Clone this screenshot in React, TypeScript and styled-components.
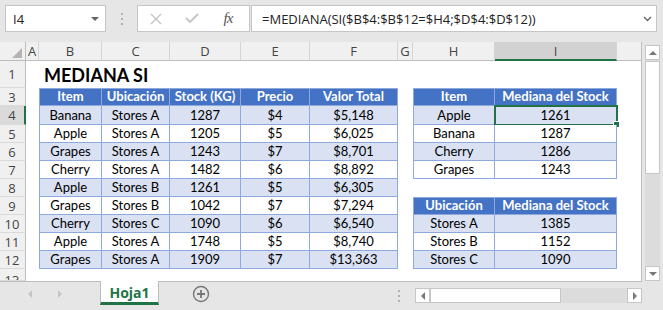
import React from "react";
import styled, { createGlobalStyle } from "styled-components";

const GlobalStyle = createGlobalStyle`
  html, body { margin: 0; padding: 0; }
  body {
    background: #e6e6e6;
    font-family: "Open Sans", "Noto Sans", sans-serif;
  }
  * { box-sizing: border-box; }
`;

const GREEN = "#217346";
const LINE = "#8ea9db";

const Window = styled.div`
  width: 663px;
  height: 310px;
  display: flex;
  flex-direction: column;
  background: #e6e6e6;
  overflow: hidden;
`;

/* formula bar */
const FormulaBar = styled.div`
  height: 42px;
  flex: none;
  display: flex;
  align-items: flex-start;
  padding: 5px 6px 0 5px;
`;

const NameBox = styled.div`
  width: 101px;
  height: 27px;
  background: #fff;
  border: 1px solid #c6c6c6;
  display: flex;
  align-items: center;
  justify-content: space-between;
  padding: 0 6px 0 7px;
  font-size: 13px;
  color: #222;
`;

const Grip = styled.div`
  width: 31px;
  height: 27px;
  display: flex;
  align-items: center;
  justify-content: center;
`;

const FxButtons = styled.div`
  width: 113px;
  height: 27px;
  background: #fff;
  border: 1px solid #c6c6c6;
  display: flex;
  align-items: center;
`;

const FxSlot = styled.div`
  width: 36px;
  height: 100%;
  display: flex;
  align-items: center;
  justify-content: center;
`;

const FxLabel = styled.span`
  font-family: "Liberation Serif", "DejaVu Serif", serif;
  font-style: italic;
  font-size: 15px;
  color: #555;
  letter-spacing: -1px;
`;

const FormulaInput = styled.div`
  flex: 1;
  height: 27px;
  margin-left: 1px;
  background: #fff;
  border: 1px solid #c6c6c6;
  display: flex;
  align-items: center;
  justify-content: space-between;
  padding: 0 4px 0 10px;
  font-size: 13px;
  color: #222;
`;

/* sheet */
const SheetArea = styled.div`
  height: 240px;
  flex: none;
  display: flex;
  gap: 3px;
`;

const Grid = styled.div`
  width: 642px;
  height: 240px;
  background: #fff;
  border-right: 1px solid #bdbdbd;
  border-bottom: 1px solid #bdbdbd;
  display: grid;
  grid-template-columns: 26px 13px 63px 68px 71px 69px 88px 15px 82px 122px 1fr;
  grid-template-rows: 19px 27px 18px 19px repeat(8, 18px) 1fr;
  overflow: hidden;
`;

const Corner = styled.div`
  grid-row: 1;
  grid-column: 1;
  background: #f0f0f0;
  border-right: 1px solid #bdbdbd;
  border-bottom: 1px solid #bdbdbd;
  display: flex;
  align-items: flex-end;
  justify-content: flex-end;
  padding: 0 3px 2px 0;
`;

const ColHead = styled.div<{ $active?: boolean; $last?: boolean }>`
  grid-row: 1;
  background: ${(p) => (p.$active ? "#d2d2d2" : "#f0f0f0")};
  border-right: ${(p) => (p.$last ? "none" : "1px solid #d4d4d4")};
  border-bottom: ${(p) => (p.$active ? `2px solid ${GREEN}` : "1px solid #bdbdbd")};
  display: flex;
  align-items: center;
  justify-content: center;
  font-size: 13px;
  color: #444;
  padding-top: ${(p) => (p.$active ? "1px" : "0")};
`;

const RowHead = styled.div<{ $row: number; $active?: boolean; $clip?: boolean }>`
  grid-column: 1;
  grid-row: ${(p) => p.$row};
  background: ${(p) => (p.$active ? "#dadada" : "#f0f0f0")};
  border-right: ${(p) => (p.$active ? `2px solid ${GREEN}` : "1px solid #bdbdbd")};
  border-bottom: 1px solid #dadada;
  display: flex;
  align-items: ${(p) => (p.$clip ? "flex-start" : "center")};
  justify-content: center;
  font-size: 13px;
  line-height: 18px;
  color: #444;
  padding-top: ${(p) => (p.$clip ? "2px" : "0")};
  padding-right: ${(p) => (p.$active ? "0" : "1px")};
  overflow: hidden;
`;

const Title = styled.div`
  grid-row: 2;
  grid-column: 3 / 8;
  align-self: end;
  padding: 0 0 4px 5px;
  font-family: "Lato", "Open Sans", sans-serif;
  font-weight: 700;
  font-size: 18px;
  line-height: 1;
  color: #000;
`;

const Table = styled.div<{ $area: string; $cols: string; $rows: string }>`
  grid-area: ${(p) => p.$area};
  display: grid;
  grid-template-columns: ${(p) => p.$cols};
  grid-template-rows: ${(p) => p.$rows};
  border-top: 1px solid ${LINE};
  border-left: 1px solid ${LINE};
  font-family: "Lato", "Open Sans", sans-serif;
  font-size: 13px;
`;

const Cell = styled.div<{ $head?: boolean; $band?: boolean }>`
  position: relative;
  display: flex;
  align-items: flex-end;
  justify-content: center;
  padding-bottom: 1px;
  white-space: nowrap;
  border-right: 1px solid ${LINE};
  border-bottom: 1px solid ${LINE};
  background: ${(p) => (p.$head ? "#4472c4" : p.$band ? "#d9e1f2" : "#fff")};
  color: ${(p) => (p.$head ? "#fff" : "#000")};
  font-weight: ${(p) => (p.$head ? 700 : 400)};
`;

const SelectionFrame = styled.div`
  position: absolute;
  left: -1px;
  top: -1px;
  right: -2px;
  bottom: -2px;
  border: 2px solid ${GREEN};
  pointer-events: none;
`;

const FillHandle = styled.div`
  position: absolute;
  right: -4px;
  bottom: -4px;
  width: 7px;
  height: 7px;
  background: ${GREEN};
  border: 1px solid #fff;
`;

/* scrollbars */
const VScroll = styled.div`
  width: 15px;
  margin-top: 3px;
  height: 236px;
  display: flex;
  flex-direction: column;
  background: #dcdcdc;
`;

const ScrollButton = styled.div`
  flex: none;
  width: 15px;
  height: 15px;
  background: #fff;
  border: 1px solid #c6c6c6;
  display: flex;
  align-items: center;
  justify-content: center;
`;

const VThumb = styled.div`
  flex: none;
  height: 113px;
  margin-top: 1px;
  background: #fff;
  border: 1px solid #c6c6c6;
`;

const Spacer = styled.div`
  flex: 1;
`;

const TabBar = styled.div`
  flex: 1;
  display: flex;
  align-items: flex-start;
`;

const TabNav = styled.div`
  width: 100px;
  height: 24px;
  display: flex;
  align-items: center;
  padding-left: 27px;
  gap: 24px;
`;

const SheetTab = styled.div`
  width: 59px;
  height: 24px;
  margin-top: -1px;
  background: #fff;
  border-left: 1px solid #bdbdbd;
  border-right: 1px solid #bdbdbd;
  border-bottom: 3px solid ${GREEN};
  display: flex;
  align-items: center;
  justify-content: center;
  font-size: 14px;
  font-weight: 700;
  color: ${GREEN};
  padding-top: 1px;
`;

const AddSheet = styled.div`
  width: 18px;
  height: 24px;
  margin-left: 33px;
  display: flex;
  align-items: center;
  justify-content: center;
`;

const TabGrip = styled.div`
  width: 16px;
  height: 24px;
  margin-top: 2px;
  display: flex;
  align-items: center;
  justify-content: center;
`;

const HScroll = styled.div`
  width: 227px;
  height: 15px;
  margin: 6px 21px 0 8px;
  display: flex;
  background: #dcdcdc;
`;

const HThumb = styled.div`
  width: 131px;
  background: #fff;
  border: 1px solid #c6c6c6;
`;

/* icons */
const Tri = ({ dir, color = "#777", size = 7 }: { dir: "up" | "down" | "left" | "right"; color?: string; size?: number }) => {
  const pts = {
    up: "0,5 4,1 8,5",
    down: "0,1 4,5 8,1",
    left: "5,0 1,4 5,8",
    right: "1,0 5,4 1,8",
  }[dir];
  const vertical = dir === "up" || dir === "down";
  return (
    <svg width={vertical ? size + 1 : 6} height={vertical ? 6 : size + 1} viewBox={vertical ? "0 0 8 6" : "0 0 6 8"}>
      <polygon points={pts} fill={color} />
    </svg>
  );
};

const Dots = ({ color = "#a8a8a8" }: { color?: string }) => (
  <svg width="4" height="12" viewBox="0 0 4 12">
    <rect x="1" y="0" width="2" height="2" fill={color} />
    <rect x="1" y="5" width="2" height="2" fill={color} />
    <rect x="1" y="10" width="2" height="2" fill={color} />
  </svg>
);

const CrossIcon = () => (
  <svg width="12" height="12" viewBox="0 0 12 12">
    <path d="M1 1 L11 11 M11 1 L1 11" stroke="#c4c4c4" strokeWidth="1.4" fill="none" />
  </svg>
);

const CheckIcon = () => (
  <svg width="14" height="11" viewBox="0 0 14 11">
    <path d="M1 5 L5 9 L13 1" stroke="#c4c4c4" strokeWidth="1.8" fill="none" />
  </svg>
);

const Chevron = () => (
  <svg width="9" height="6" viewBox="0 0 9 6">
    <path d="M1 1 L4.5 4.5 L8 1" stroke="#666" strokeWidth="1.4" fill="none" />
  </svg>
);

const CornerTriangle = () => (
  <svg width="10" height="10" viewBox="0 0 10 10">
    <polygon points="10,0 10,10 0,10" fill="#b4b4b4" />
  </svg>
);

const PlusCircle = () => (
  <svg width="18" height="18" viewBox="0 0 18 18">
    <circle cx="9" cy="9" r="7.5" stroke="#777" strokeWidth="1.4" fill="none" />
    <path d="M9 5 V13 M5 9 H13" stroke="#777" strokeWidth="1.8" />
  </svg>
);

/* data */
const columns = [
  { key: "A" }, { key: "B" }, { key: "C" }, { key: "D" }, { key: "E" },
  { key: "F" }, { key: "G" }, { key: "H" }, { key: "I", active: true }, { key: "" },
];

const stock = [
  ["Banana", "Stores A", "1287", "$4", "$5,148"],
  ["Apple", "Stores A", "1205", "$5", "$6,025"],
  ["Grapes", "Stores A", "1243", "$7", "$8,701"],
  ["Cherry", "Stores A", "1482", "$6", "$8,892"],
  ["Apple", "Stores B", "1261", "$5", "$6,305"],
  ["Grapes", "Stores B", "1042", "$7", "$7,294"],
  ["Cherry", "Stores C", "1090", "$6", "$6,540"],
  ["Apple", "Stores A", "1748", "$5", "$8,740"],
  ["Grapes", "Stores A", "1909", "$7", "$13,363"],
];

const byItem = [
  ["Apple", "1261"],
  ["Banana", "1287"],
  ["Cherry", "1286"],
  ["Grapes", "1243"],
];

const byStore = [
  ["Stores A", "1385"],
  ["Stores B", "1152"],
  ["Stores C", "1090"],
];

const rowNumbers = [
  { n: 1, row: 2 }, { n: 3, row: 3 }, { n: 4, row: 4 }, { n: 5, row: 5 }, { n: 6, row: 6 },
  { n: 7, row: 7 }, { n: 8, row: 8 }, { n: 9, row: 9 }, { n: 10, row: 10 }, { n: 11, row: 11 },
  { n: 12, row: 12 }, { n: 13, row: 13 },
];

function DataTable({
  area, cols, rows, head, body, selected,
}: {
  area: string;
  cols: string;
  rows: string;
  head: string[];
  body: string[][];
  selected?: [number, number];
}) {
  return (
    <Table $area={area} $cols={cols} $rows={rows}>
      {head.map((h) => (
        <Cell key={h} $head>{h}</Cell>
      ))}
      {body.map((r, i) =>
        r.map((v, j) => {
          const isSel = selected && selected[0] === i && selected[1] === j;
          return (
            <Cell key={`${i}-${j}`} $band={i % 2 === 0}>
              {v}
              {isSel && (
                <SelectionFrame>
                  <FillHandle />
                </SelectionFrame>
              )}
            </Cell>
          );
        })
      )}
    </Table>
  );
}

export default function App() {
  return (
    <>
      <GlobalStyle />
      <Window>
        <FormulaBar>
          <NameBox>
            <span>I4</span>
            <Tri dir="down" color="#666" />
          </NameBox>
          <Grip>
            <Dots color="#b0b0b0" />
          </Grip>
          <FxButtons>
            <FxSlot><CrossIcon /></FxSlot>
            <FxSlot><CheckIcon /></FxSlot>
            <FxSlot><FxLabel>fx</FxLabel></FxSlot>
          </FxButtons>
          <FormulaInput>
            <span>=MEDIANA(SI($B$4:$B$12=$H4;$D$4:$D$12))</span>
            <Chevron />
          </FormulaInput>
        </FormulaBar>

        <SheetArea>
          <Grid>
            <Corner><CornerTriangle /></Corner>
            {columns.map((c, i) => (
              <ColHead key={i} $active={c.active} $last={i === columns.length - 1}>
                {c.key}
              </ColHead>
            ))}
            {rowNumbers.map((r) => (
              <RowHead key={r.n} $row={r.row} $active={r.n === 4} $clip={r.n === 13}>
                {r.n}
              </RowHead>
            ))}

            <Title>MEDIANA SI</Title>

            <DataTable
              area="3 / 3 / 13 / 8"
              cols="62px 68px 71px 69px 88px"
              rows="17px 19px repeat(8, 18px)"
              head={["Item", "Ubicación", "Stock (KG)", "Precio", "Valor Total"]}
              body={stock}
            />
            <DataTable
              area="3 / 9 / 8 / 11"
              cols="81px 122px"
              rows="17px 19px repeat(3, 18px)"
              head={["Item", "Mediana del Stock"]}
              body={byItem}
              selected={[0, 1]}
            />
            <DataTable
              area="9 / 9 / 13 / 11"
              cols="81px 122px"
              rows="17px repeat(3, 18px)"
              head={["Ubicación", "Mediana del Stock"]}
              body={byStore}
            />
          </Grid>

          <VScroll>
            <ScrollButton><Tri dir="up" /></ScrollButton>
            <VThumb />
            <Spacer />
            <ScrollButton><Tri dir="down" /></ScrollButton>
          </VScroll>
        </SheetArea>

        <TabBar>
          <TabNav>
            <Tri dir="left" color="#c4c4c4" />
            <Tri dir="right" color="#c4c4c4" />
          </TabNav>
          <SheetTab>Hoja1</SheetTab>
          <AddSheet><PlusCircle /></AddSheet>
          <Spacer />
          <TabGrip><Dots color="#b0b0b0" /></TabGrip>
          <HScroll>
            <ScrollButton><Tri dir="left" /></ScrollButton>
            <HThumb />
            <Spacer />
            <ScrollButton><Tri dir="right" /></ScrollButton>
          </HScroll>
        </TabBar>
      </Window>
    </>
  );
}
